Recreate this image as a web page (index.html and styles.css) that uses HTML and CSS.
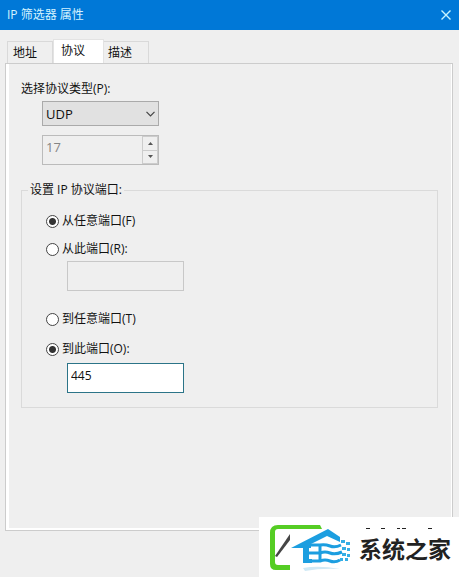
FILE: index.html
```html
<!DOCTYPE html>
<html lang="zh-CN">
<head>
    <title>IP 筛选器 属性</title>
    <meta charset="UTF-8">
    <meta name="viewport" content="width=device-width, initial-scale=1.0">
    <link rel="stylesheet" href="styles.css">
</head>
<body>
    <header class="titlebar">
        <span>IP 筛选器 属性</span>
        <button class="close" type="button" aria-label="关闭">
            <svg width="10" height="10" viewBox="0 0 10 10"><path d="M0.5 0.5L9.5 9.5M9.5 0.5L0.5 9.5" stroke="#c8f4ff" stroke-width="1.4"/></svg>
        </button>
    </header>

    <main class="dialog">
        <div class="tabs" role="tablist">
            <button class="tab" type="button" role="tab">地址</button>
            <button class="tab active" type="button" role="tab" aria-selected="true">协议</button>
            <button class="tab" type="button" role="tab">描述</button>
        </div>

        <form class="panel">
            <label class="type-label" for="protocol">选择协议类型(P):</label>
            <div class="select-box">
                <select id="protocol" class="field">
                    <option>UDP</option>
                    <option>TCP</option>
                </select>
                <svg class="chevron" width="9" height="6" viewBox="0 0 9 6"><path d="M0.5 0.8L4.5 4.8L8.5 0.8" fill="none" stroke="#444" stroke-width="1.2"/></svg>
            </div>

            <div class="spinner field">
                <input type="text" value="17" aria-label="协议号" disabled>
                <div class="spin-buttons">
                    <button type="button" aria-label="增加" disabled><svg width="5" height="3" viewBox="0 0 5 3"><path d="M2.5 0L5 3H0z" fill="#555"/></svg></button>
                    <button type="button" aria-label="减少" disabled><svg width="5" height="3" viewBox="0 0 5 3"><path d="M0 0H5L2.5 3z" fill="#555"/></svg></button>
                </div>
            </div>

            <fieldset class="ports">
                <legend>设置 IP 协议端口:</legend>
                <div class="group">
                    <label class="radio"><input type="radio" name="from" checked>从任意端口(F)</label>
                    <label class="radio"><input type="radio" name="from">从此端口(R):</label>
                    <input class="port" type="text" aria-label="源端口" disabled>
                </div>
                <div class="group">
                    <label class="radio"><input type="radio" name="to">到任意端口(T)</label>
                    <label class="radio"><input type="radio" name="to" checked>到此端口(O):</label>
                    <input class="port current" type="text" value="445" aria-label="目标端口">
                </div>
            </fieldset>
        </form>
    </main>

    <div class="brand">
        <svg class="logo" width="200" height="60" viewBox="0 0 200 60">
            <!-- green frame -->
            <path d="M61 8H19Q11 8 11 16V47Q11 53 17 53H31V48H19Q16 48 16 45V15Q16 12 19 12H63Z" fill="#55cd24"/>
            <path d="M16 39L31 17V23L18 40Z" fill="#454545"/>
            <!-- house -->
            <path d="M32 31L69 12L81 20V25L68 19L52 27V31H50V42H53V46H44V31Z" fill="#1c9ee0"/>
            <g fill="none" stroke="#1c9ee0" stroke-width="3">
                <path d="M52 28H61Q66 27 71 29T82 28"/>
                <path d="M49 36H61Q66 34 71 36T83 35"/>
                <path d="M49 44H61Q66 42 71 44T81 43"/>
                <path d="M61 27V45"/>
            </g>
            <path d="M82 23h4v3h-4zM87 25h4v3h-4zM83 30h4v3h-4zM88 31h3v3h-3zM83 36h4v3h-4zM88 37h3v3h-3zM81 41h3v3h-3zM86 41h3v3h-3z" fill="#35aee5"/>
            <path d="M44 51Q60 48 81 52Q62 51 46 54Z" fill="#cfe9f5"/>
            <!-- cut-off strokes over the name -->
            <path d="M107 11h4v1h-4zM122 11h4v1h-4zM138 11h3v1h-3zM143 11h4v1h-4zM169 11h4v1h-4z" fill="#222"/>
        </svg>
        <span>系统之家</span>
    </div>
</body>
</html>
```

FILE: styles.css
```css
* {
    box-sizing: border-box;
}
body {
    position: relative;
    display: flex;
    flex-direction: column;
    min-height: 100vh;
    margin: 0;
    background-color: #efefef;
    color: #111;
    font-family: "Open Sans", "Noto Sans CJK SC", sans-serif;
    font-size: 12px;
    line-height: 16px;
}
button, input, select {
    margin: 0;
    padding: 0;
    border: 0;
    border-radius: 0;
    background: none;
    color: inherit;
    font: inherit;
}
svg {
    display: block;
}
.titlebar {
    display: flex;
    align-items: center;
    justify-content: space-between;
    height: 30px;
    padding: 0 8px 0 7px;
    background-color: #0078d7;
    color: #d4f3ff;
}
.dialog {
    flex: 1;
    display: flex;
    flex-direction: column;
    padding: 9px 6px 46px 5px;
}
.tabs {
    display: flex;
    align-items: flex-end;
    padding-left: 2px;
}
.tab {
    width: 46px;
    height: 22px;
    padding: 0 0 0 5px;
    border: 1px solid #d9d9d9;
    border-bottom: 0;
    text-align: left;
}
.tab.active {
    width: 51px;
    height: 25px;
    margin-bottom: -1px;
    padding: 0 0 2px 7px;
    border-color: #e3e3e3;
    background-color: #fff;
}
.tab.active + .tab {
    width: 45px;
    padding-left: 4px;
    border-left: 0;
}
.panel {
    flex: 1;
    padding: 17px 14px 24px 12px;
    border: 1px solid #ccc;
    box-shadow: inset 3px 0 #fff, inset -1px -2px #fff;
}
.type-label {
    display: block;
    margin: 0 0 4px 3px;
}
.field {
    width: 117px;
    border: 1px solid #aaa;
    font-size: 13px;
}
.select-box {
    position: relative;
    width: 117px;
    margin-left: 24px;
}
select.field {
    display: block;
    height: 25px;
    padding-left: 3px;
    appearance: none;
    background-color: #e1e1e1;
}
.chevron {
    position: absolute;
    top: 10px;
    right: 4px;
    pointer-events: none;
}
.spinner {
    display: flex;
    height: 30px;
    margin: 9px 0 0 24px;
    border-color: #bbb;
}
.spinner input {
    flex: 1;
    min-width: 0;
    padding: 0 0 6px 3px;
    color: #858585;
}
.spin-buttons {
    display: flex;
    flex-direction: column;
    width: 16px;
}
.spin-buttons button {
    flex: 1;
    display: flex;
    align-items: center;
    justify-content: center;
    border: 1px solid #ccc;
}
.spin-buttons button + button {
    border-top: 0;
}
.ports {
    margin: 17px 0 0 3px;
    padding: 15px 0 14px 24px;
    border: 1px solid #dadada;
}
.ports legend {
    margin-left: -18px;
    padding: 0 2px;
}
.group + .group {
    margin-top: 20px;
}
.radio {
    display: flex;
    align-items: center;
    gap: 3px;
}
.radio + .radio {
    margin-top: 12px;
}
.group + .group .radio + .radio {
    margin-top: 14px;
}
.radio input {
    width: 13px;
    height: 13px;
    appearance: none;
    border: 1px solid #444;
    border-radius: 50%;
    background-color: #fff;
}
.radio input:checked {
    background-image: radial-gradient(circle, #333 3px, #fff 4px);
}
.port {
    display: block;
    width: 117px;
    height: 30px;
    margin: 4px 0 0 21px;
    padding: 0 4px 6px 3px;
    border: 1px solid #c8c8c8;
}
.port.current {
    margin-top: 6px;
    border-color: #2b7488;
    background-color: #fff;
}
.brand {
    position: absolute;
    right: 0;
    bottom: 0;
    display: flex;
    align-items: center;
    width: 200px;
    height: 60px;
    padding: 2px 0 0 100px;
    background-color: #fff;
    color: #222;
    font-family: "Noto Sans CJK SC", sans-serif;
    font-size: 23px;
    font-weight: bold;
    line-height: 30px;
}
.logo {
    position: absolute;
    top: 0;
    left: 0;
}
```
